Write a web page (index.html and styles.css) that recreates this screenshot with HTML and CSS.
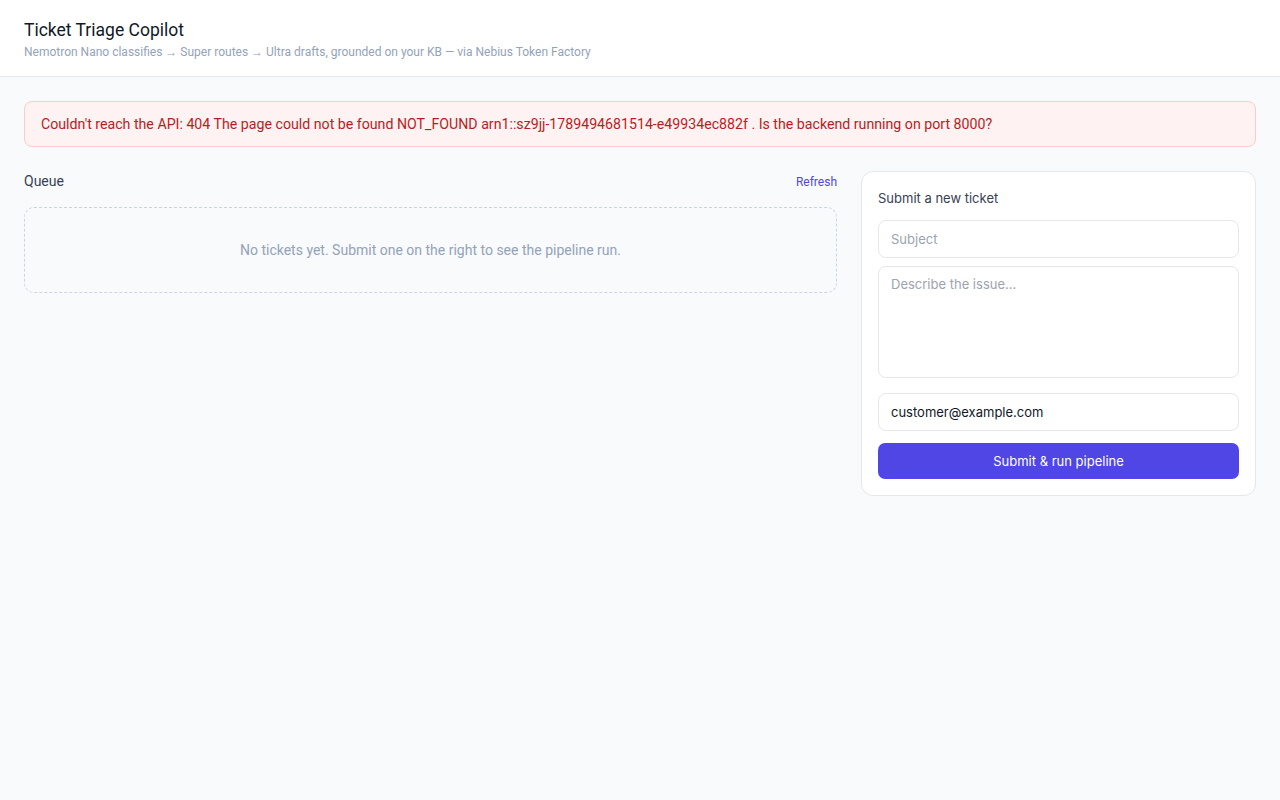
FILE: index.html
```html
<!DOCTYPE html>
<html lang="en">
<head>
<meta charset="utf-8">
<title>Ticket Triage Copilot</title>
<link rel="stylesheet" href="styles.css">
</head>
<body>
<header class="topbar">
  <h1 class="title">Ticket Triage Copilot</h1>
  <p class="subtitle">Nemotron Nano classifies → Super routes → Ultra drafts, grounded on your KB — via Nebius Token Factory</p>
</header>
<main class="main">
  <div class="error">Couldn't reach the API: 404 The page could not be found NOT_FOUND arn1::sz9jj-1789494681514-e49934ec882f . Is the backend running on port 8000?</div>
  <div class="grid">
    <section class="queue">
      <div class="queue-head">
        <span class="queue-title">Queue</span>
        <button class="refresh" type="button">Refresh</button>
      </div>
      <div class="empty">No tickets yet. Submit one on the right to see the pipeline run.</div>
    </section>
    <aside class="card">
      <h2 class="card-title">Submit a new ticket</h2>
      <form class="form">
        <input class="field" type="text" placeholder="Subject">
        <textarea class="field area" placeholder="Describe the issue..."></textarea>
        <input class="field" type="email" value="customer@example.com">
        <button class="submit" type="button">Submit &amp; run pipeline</button>
      </form>
    </aside>
  </div>
</main>
</body>
</html>
```
FILE: styles.css
```css
* { box-sizing: border-box; }
html, body { margin: 0; padding: 0; }
body {
  background: #f8fafc;
  font-family: Roboto, "Liberation Sans", sans-serif;
  color: #1f2937;
  min-height: 800px;
}
.topbar {
  background: #ffffff;
  border-bottom: 1px solid #e2e8f0;
  padding: 19px 24px 17px;
  height: 77px;
}
.title {
  margin: 0;
  font-size: 17.5px;
  font-weight: 400;
  color: #111827;
  line-height: 22px;
}
.subtitle {
  margin: 4px 0 0;
  font-size: 12px;
  color: #94a3b8;
  line-height: 15px;
}
.main {
  padding: 24px;
}
.error {
  background: #fef2f2;
  border: 1px solid #fecaca;
  border-radius: 8px;
  color: #b91c1c;
  font-size: 14.18px;
  padding: 13px 16px;
  line-height: 18px;
}
.grid {
  display: grid;
  grid-template-columns: 1fr 395px;
  gap: 24px;
  margin-top: 24px;
  align-items: start;
}
.queue-head {
  display: flex;
  justify-content: space-between;
  align-items: center;
  height: 20px;
  margin-bottom: 16px;
}
.queue-title {
  font-size: 14px;
  color: #374151;
}
.refresh {
  background: none;
  border: 0;
  padding: 0;
  margin-top: 1px;
  font-family: Roboto, "Liberation Sans", sans-serif;
  font-size: 12px;
  color: #4f46e5;
  cursor: pointer;
}
.empty {
  border: 1px dashed #cbd5e1;
  border-radius: 10px;
  height: 86px;
  display: flex;
  align-items: center;
  justify-content: center;
  font-size: 14px;
  color: #94a3b8;
}
.card {
  background: #ffffff;
  border: 1px solid #e5e7eb;
  border-radius: 12px;
  padding: 16px;
  font-family: Inter, "Noto Sans", sans-serif;
}
.card-title {
  margin: 0 0 12px;
  font-size: 13px;
  font-weight: 400;
  color: #374151;
  line-height: 20px;
}
.form {
  display: flex;
  flex-direction: column;
  gap: 8px;
}
.field {
  width: 100%;
  height: 38px;
  border: 1px solid #e5e7eb;
  border-radius: 8px;
  padding: 0 12px;
  font-family: Inter, "Noto Sans", sans-serif;
  font-size: 13px;
  color: #111827;
  background: #ffffff;
  outline: none;
}
.field::placeholder { color: #9ca3af; }
.area {
  height: 112px;
  padding: 9px 12px;
  resize: none;
  line-height: 16px;
  margin-bottom: 7px;
}
.submit {
  margin-top: 4px;
  height: 36px;
  border: 0;
  border-radius: 7px;
  background: #4f46e5;
  color: #ffffff;
  font-family: Inter, "Noto Sans", sans-serif;
  font-size: 13px;
  cursor: pointer;
}
```
